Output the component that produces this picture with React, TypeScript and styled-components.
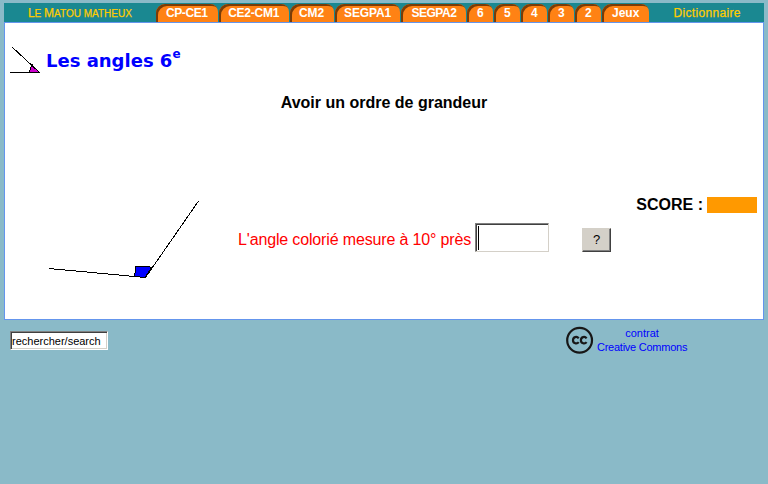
import React from "react";
import styled, { createGlobalStyle } from "styled-components";

const GlobalStyle = createGlobalStyle`
  * { box-sizing: border-box; }
  body {
    margin: 0;
    background: #8abac8;
    font-family: "Liberation Sans", Arial, sans-serif;
  }
`;

const Page = styled.div`
  width: 768px;
  height: 484px;
  padding: 3px 4px 0;
  overflow: hidden;
`;

const NavBar = styled.nav`
  display: flex;
  height: 19px;
  background: #1a8891;
  font-size: 12px;
  line-height: 20px;
  white-space: nowrap;
`;

const NavLink = styled.a<{ $width: number }>`
  width: ${(p) => p.$width}px;
  text-align: center;
  color: #fc0;
  letter-spacing: 0.33px;
  -webkit-text-stroke: 0.25px #fc0;
`;

const Brand = styled(NavLink)`
  font-size: 10px;
  letter-spacing: 0;
  text-transform: uppercase;
`;

const Capital = styled.span`
  font-size: 12px;
`;

const Tab = styled.a<{ $width: number; $spacing?: number }>`
  width: ${(p) => p.$width}px;
  height: 18px;
  margin: 1px 1px 0 0;
  border-radius: 9px 8px 0 0;
  background: #ff8214;
  box-shadow: inset 2px 2px 0 #7a3c08;
  color: #fff;
  font-weight: bold;
  line-height: 18px;
  text-align: center;
  letter-spacing: ${(p) => p.$spacing ?? 0}px;
`;

const Panel = styled.main`
  height: 298px;
  border: 1px solid #6495ed;
  background: #fff;
  padding: 21px 6px 0 5px;
`;

const Heading = styled.header`
  display: flex;
  height: 31px;
`;

const Title = styled.h1`
  margin: 5px 0 0 6px;
  color: #00f;
  font: bold 18px/24px "DejaVu Sans", Verdana, sans-serif;
  white-space: nowrap;
`;

const Superscript = styled.sup`
  font-size: 12px;
  line-height: 0;
  vertical-align: 9px;
`;

const Subtitle = styled.h2`
  margin: 18px 0 0;
  padding-left: 1px;
  font-size: 16px;
  line-height: 20px;
  text-align: center;
`;

const Exercise = styled.section`
  display: grid;
  grid-template-columns: 228px 1fr;
  margin-top: 82px;
`;

const AngleDrawing = styled.svg`
  display: block;
  margin-left: 34px;
  margin-top: 5px;
`;

const Score = styled.div`
  display: flex;
  justify-content: flex-end;
  align-items: center;
  gap: 4px;
  height: 20px;
  font-size: 16px;
  font-weight: bold;
`;

const ScoreBar = styled.span`
  width: 50px;
  height: 16px;
`;

const ScoreFill = styled(ScoreBar)`
  background: #f90;
`;

const Question = styled.form`
  display: flex;
  align-items: center;
  height: 29px;
  margin-top: 8px;
`;

const Prompt = styled.label`
  width: 237px;
  padding-top: 5px;
  color: #f00;
  font-size: 16px;
  line-height: 20px;
  letter-spacing: -0.15px;
  white-space: nowrap;
`;

const Answer = styled.div`
  width: 74px;
  height: 29px;
  border: 1px solid;
  border-color: #808080 #d4d0c8 #d4d0c8 #808080;
  box-shadow: inset 1px 1px 0 #404040;
  padding: 2px;
`;

const Caret = styled.span`
  display: block;
  width: 1px;
  height: 24px;
  background: #000;
`;

const HelpButton = styled.button`
  width: 29px;
  height: 24px;
  margin: 5px 0 0 33px;
  padding: 0;
  border: 1px solid;
  border-color: #d4d0c8 #404040 #404040 #d4d0c8;
  border-radius: 0;
  background: #d4d0c8;
  box-shadow: inset -1px -1px 0 #808080;
  font: 13px/20px "Liberation Sans", Arial, sans-serif;
`;

const Footer = styled.footer`
  display: flex;
  padding: 6px 0 0 6px;
`;

const Search = styled.input`
  width: 98px;
  height: 19px;
  margin-top: 5px;
  padding: 1px 0 0 1px;
  border: 1px solid;
  border-color: #808080 #fff #fff #808080;
  border-radius: 0;
  background: #fff;
  box-shadow: inset 1px 1px 0 #404040, inset -1px -1px 0 #d4d0c8;
  color: #000;
  font: 11px "Liberation Sans", Arial, sans-serif;
`;

const License = styled.a`
  display: flex;
  margin-left: 458px;
  color: #00f;
  font-size: 11px;
  line-height: 14px;
  text-align: center;
  white-space: nowrap;
`;

const LicenseText = styled.span`
  margin-left: 3px;
`;

const LicenseName = styled.span`
  letter-spacing: -0.25px;
`;

const tabs = [
  { label: "CP-CE1", width: 62, spacing: -0.4 },
  { label: "CE2-CM1", width: 70, spacing: -0.25 },
  { label: "CM2", width: 44 },
  { label: "SEGPA1", width: 66, spacing: -0.15 },
  { label: "SEGPA2", width: 65, spacing: -0.5 },
  { label: "6", width: 26 },
  { label: "5", width: 26 },
  { label: "4", width: 26 },
  { label: "3", width: 26 },
  { label: "2", width: 26 },
  { label: "Jeux", width: 47 },
];

export default function App() {
  return (
    <>
      <GlobalStyle />
      <Page>
        <NavBar>
          <Brand $width={152}>
            <Capital>L</Capital>e <Capital>M</Capital>atou matheux
          </Brand>
          {tabs.map((t) => (
            <Tab key={t.label} $width={t.width} $spacing={t.spacing}>
              {t.label}
            </Tab>
          ))}
          <NavLink $width={114}>Dictionnaire</NavLink>
        </NavBar>
        <Panel>
          <Heading>
            <svg width="30" height="31" shapeRendering="crispEdges">
              <path d="M29 28.5 H20 V25 L22 20.5 Z" fill="#c0c" />
              <path d="M19.5 28.5 L20.5 24 L22.5 20.5" fill="none" stroke="#000" />
              <path d="M2 3 L29.5 28.5 H0" fill="none" stroke="#000" />
            </svg>
            <Title>
              Les angles 6<Superscript>e</Superscript>
            </Title>
          </Heading>
          <Subtitle>Avoir un ordre de grandeur</Subtitle>
          <Exercise>
            <AngleDrawing width="160" height="80" shapeRendering="crispEdges">
              <path
                d="M90.5 76.5 L91.5 70 V67 L94 66.5 H105 L107.5 67.5 L101 77.5 Z"
                fill="#00f"
                stroke="#000"
              />
              <path d="M5 68.5 L101.5 77.5 L154.5 1" fill="none" stroke="#000" />
            </AngleDrawing>
            <div>
              <Score>
                SCORE : <ScoreFill />
              </Score>
              <Question>
                <Prompt>L'angle colorié mesure à 10° près</Prompt>
                <Answer>
                  <Caret />
                </Answer>
                <HelpButton type="button">?</HelpButton>
              </Question>
            </div>
          </Exercise>
        </Panel>
        <Footer>
          <Search defaultValue="rechercher/search" />
          <License>
            <svg width="28" height="28" viewBox="0 0 28 28" fill="none" stroke="#171717">
              <circle cx="13.6" cy="14.2" r="12.4" strokeWidth="2.2" />
              <path
                d="M12.7 12.3 C10.9 9.9 7 10.9 7 14.2 C7 17.5 10.9 18.5 12.7 16.1 M20.6 12.3 C18.8 9.9 14.9 10.9 14.9 14.2 C14.9 17.5 18.8 18.5 20.6 16.1"
                strokeWidth="2.2"
              />
            </svg>
            <LicenseText>
              contrat
              <br />
              <LicenseName>Creative Commons</LicenseName>
            </LicenseText>
          </License>
        </Footer>
      </Page>
    </>
  );
}
